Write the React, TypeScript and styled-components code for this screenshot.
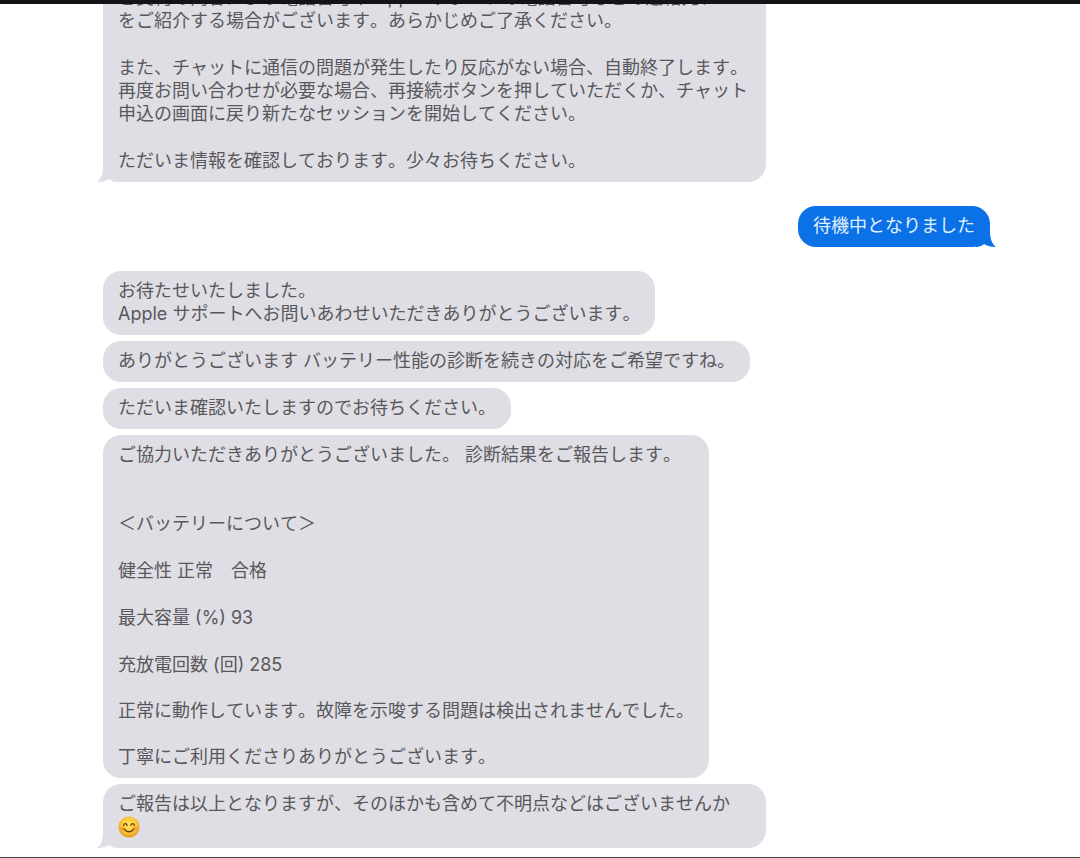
import React from "react";
import styled, { createGlobalStyle, css } from "styled-components";

const GlobalStyle = createGlobalStyle`
  * { box-sizing: border-box; }
  body {
    margin: 0;
    background: #ffffff;
    font-family: Inter, "Noto Sans CJK JP", sans-serif;
    font-kerning: none;
  }
`;

type Side = "agent" | "customer";

const colours: Record<Side, { fill: string; text: string }> = {
  agent: { fill: "#dfdee4", text: "#58585c" },
  customer: { fill: "#0a71e6", text: "#e0f0ff" },
};

const Screen = styled.div`
  display: flex;
  flex-direction: column;
  height: 100vh;
  border-top: 4px solid #131318;
  border-bottom: 1px solid #48484a;
`;

/* The newest message stays at the bottom; older ones run off the top. */
const Transcript = styled.main`
  flex: 1;
  min-height: 0;
  display: flex;
  flex-direction: column;
  justify-content: flex-end;
  gap: 24px;
  padding: 0 90px 9px 103px;
  overflow: hidden;
`;

const Turn = styled.section<{ $side: Side }>`
  flex: none;
  display: flex;
  flex-direction: column;
  align-items: ${(p) => (p.$side === "agent" ? "flex-start" : "flex-end")};
  gap: 6px;
`;

const BubbleBox = styled.article<{ $side: Side }>`
  position: relative;
  display: flex;
  flex-direction: column;
  gap: 23px;
  max-width: min(663px, 100%);
  padding: 8px 15px 10px;
  border-radius: 18px;
  background: ${(p) => colours[p.$side].fill};
  color: ${(p) => colours[p.$side].text};
  font-size: 18px;
  line-height: 23px;
`;

const TailShape = styled.svg<{ $side: Side }>`
  position: absolute;
  bottom: 0;
  width: 20px;
  height: 16px;
  fill: ${(p) => colours[p.$side].fill};
  ${(p) =>
    p.$side === "agent"
      ? css`
          left: -6px;
        `
      : css`
          right: -6px;
          transform: scaleX(-1);
        `}
`;

const Text = styled.p`
  margin: 0;
  white-space: pre-line;
`;

const Intro = styled(Text)`
  padding-bottom: 23px;
`;

const Paragraphs = styled.div`
  display: flex;
  flex-direction: column;
  gap: 24px;
`;

const EmojiIcon = styled.svg`
  width: 22px;
  height: 22px;
  margin-right: 2px;
  vertical-align: -5px;
`;

function Bubble({ side = "agent", tail, children }: { side?: Side; tail?: boolean; children: React.ReactNode }) {
  return (
    <BubbleBox $side={side}>
      {children}
      {tail && (
        <TailShape $side={side} viewBox="0 0 20 16" aria-hidden="true">
          <path d="M6 0C6 8 4 13 0 16C5 16 9 15 12 13C14 15 17 16 20 16V0Z" />
        </TailShape>
      )}
    </BubbleBox>
  );
}

function SmilingFace() {
  return (
    <EmojiIcon viewBox="0 0 22 22" role="img" aria-label="笑顔">
      <defs>
        <radialGradient id="face" cx="50%" cy="42%" r="55%">
          <stop offset="0%" stopColor="#ffe45c" />
          <stop offset="65%" stopColor="#fdc93a" />
          <stop offset="100%" stopColor="#e99a22" />
        </radialGradient>
        <radialGradient id="blush">
          <stop offset="0%" stopColor="#f47a3a" stopOpacity="0.75" />
          <stop offset="100%" stopColor="#f47a3a" stopOpacity="0" />
        </radialGradient>
      </defs>
      <circle cx="11" cy="11" r="10.5" fill="url(#face)" />
      <ellipse cx="4.8" cy="12.6" rx="3.4" ry="2.6" fill="url(#blush)" />
      <ellipse cx="17.2" cy="12.6" rx="3.4" ry="2.6" fill="url(#blush)" />
      <g fill="none" stroke="#70420f" strokeWidth="1.4" strokeLinecap="round">
        <path d="M5.6 9.3C6.1 7 8.6 7 9.1 9.3" />
        <path d="M12.9 9.3C13.4 7 15.9 7 16.4 9.3" />
        <path d="M6.2 13.2C8.4 16.6 13.6 16.6 15.8 13.2" />
      </g>
    </EmojiIcon>
  );
}

export default function App() {
  return (
    <>
      <GlobalStyle />
      <Screen lang="ja">
        <Transcript>
          <Turn $side="agent">
            <Bubble tail>
              <Paragraphs>
                <Text>
                  {"ご契約の内容により電話番号や Apple サポートの電話番号などの連絡先、\nをご紹介する場合がございます。あらかじめご了承ください。"}
                </Text>
                <Text>
                  {"また、チャットに通信の問題が発生したり反応がない場合、自動終了します。\n再度お問い合わせが必要な場合、再接続ボタンを押していただくか、チャット申込の画面に戻り新たなセッションを開始してください。"}
                </Text>
                <Text>ただいま情報を確認しております。少々お待ちください。</Text>
              </Paragraphs>
            </Bubble>
          </Turn>

          <Turn $side="customer">
            <Bubble side="customer" tail>
              <Text>待機中となりました</Text>
            </Bubble>
          </Turn>

          <Turn $side="agent">
            <Bubble>
              <Text>{"お待たせいたしました。\nApple サポートへお問いあわせいただきありがとうございます。"}</Text>
            </Bubble>
            <Bubble>
              <Text>ありがとうございます バッテリー性能の診断を続きの対応をご希望ですね。</Text>
            </Bubble>
            <Bubble>
              <Text>ただいま確認いたしますのでお待ちください。</Text>
            </Bubble>
            <Bubble>
              <Intro>ご協力いただきありがとうございました。 診断結果をご報告します。</Intro>
              <Paragraphs>
                <Text>＜バッテリーについて＞</Text>
                <Text>{"健全性 正常　合格"}</Text>
                <Text>最大容量 (%) 93</Text>
                <Text>充放電回数 (回) 285</Text>
              </Paragraphs>
              <Text>正常に動作しています。故障を示唆する問題は検出されませんでした。</Text>
              <Text>丁寧にご利用くださりありがとうございます。</Text>
            </Bubble>
            <Bubble tail>
              <Text>
                ご報告は以上となりますが、そのほかも含めて不明点などはございませんか
                <SmilingFace />
              </Text>
            </Bubble>
          </Turn>
        </Transcript>
      </Screen>
    </>
  );
}
